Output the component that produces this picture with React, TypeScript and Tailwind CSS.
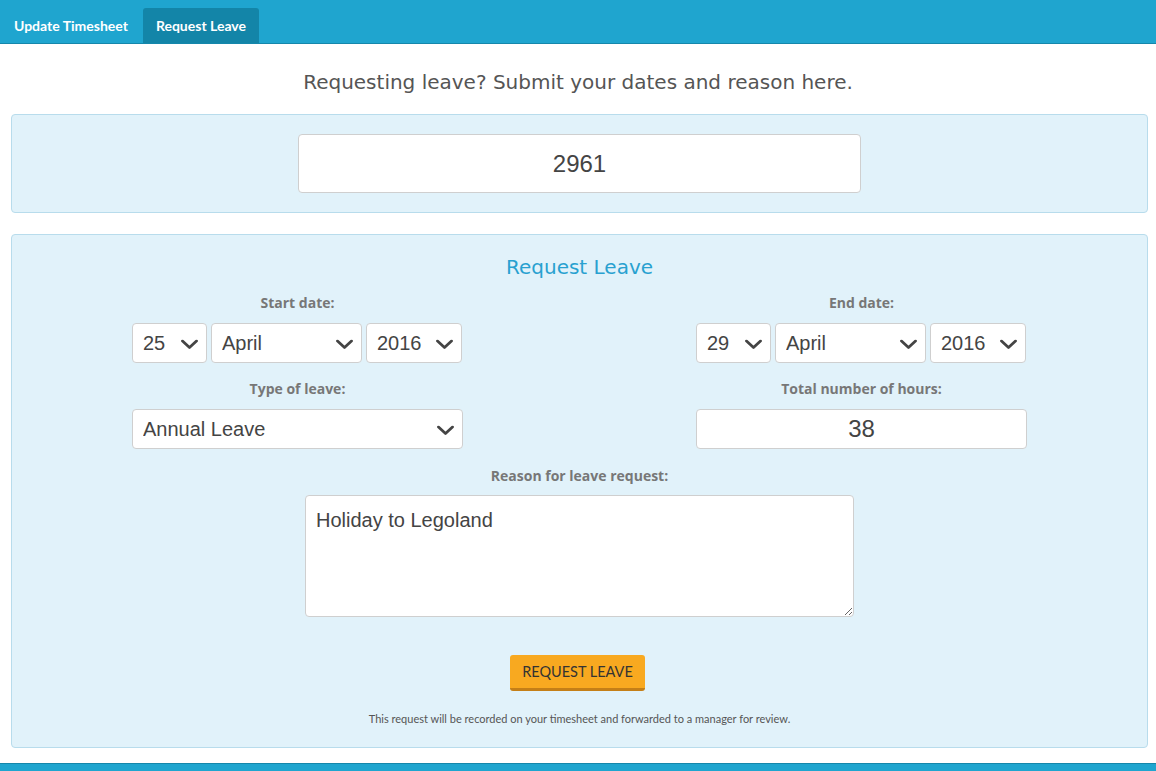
import React, { useState } from "react";

const days = Array.from({ length: 31 }, (_, i) => String(i + 1));
const months = [
  "January", "February", "March", "April", "May", "June",
  "July", "August", "September", "October", "November", "December",
];
const years = ["2015", "2016", "2017"];

const labelCls =
  "block text-center font-['Open_Sans',sans-serif] text-[14px] font-bold leading-[16px] text-[#777]";

function Chevron() {
  return (
    <svg
      className="pointer-events-none absolute right-[9px] top-1/2 -translate-y-[35%]"
      width="17"
      height="10"
      viewBox="0 0 17 10"
      fill="none"
    >
      <polyline points="1.5,1.5 8.5,8 15.5,1.5" stroke="#444" strokeWidth="2.8" strokeLinecap="round" strokeLinejoin="round" />
    </svg>
  );
}

function Select({
  value,
  options,
  onChange,
  className,
}: {
  value: string;
  options: string[];
  onChange: (v: string) => void;
  className: string;
}) {
  return (
    <div className={`relative ${className}`}>
      <select
        value={value}
        onChange={(e) => onChange(e.target.value)}
        className="h-[40px] w-full appearance-none rounded-[4px] border border-[#cfcfcf] bg-white pl-[10px] pr-[30px] font-['Liberation_Sans',Arial,sans-serif] text-[20px] text-[#444] outline-none"
      >
        {options.map((o) => (
          <option key={o} value={o}>
            {o}
          </option>
        ))}
      </select>
      <Chevron />
    </div>
  );
}

function DatePicker({
  label,
  date,
  setDate,
}: {
  label: string;
  date: { d: string; m: string; y: string };
  setDate: (d: { d: string; m: string; y: string }) => void;
}) {
  return (
    <div>
      <label className={labelCls}>{label}</label>
      <div className="mt-[12px] flex gap-[4px]">
        <Select className="w-[75px]" value={date.d} options={days} onChange={(v) => setDate({ ...date, d: v })} />
        <Select className="w-[151px]" value={date.m} options={months} onChange={(v) => setDate({ ...date, m: v })} />
        <Select className="w-[96px]" value={date.y} options={years} onChange={(v) => setDate({ ...date, y: v })} />
      </div>
    </div>
  );
}

export default function App() {
  const [employeeId, setEmployeeId] = useState("2961");
  const [start, setStart] = useState({ d: "25", m: "April", y: "2016" });
  const [end, setEnd] = useState({ d: "29", m: "April", y: "2016" });
  const [leaveType, setLeaveType] = useState("Annual Leave");
  const [hours, setHours] = useState("38");
  const [reason, setReason] = useState("Holiday to Legoland");

  return (
    <div className="flex min-h-[771px] flex-col bg-white">
      {/* Top tab bar */}
      <nav className="flex h-[44px] items-end border-b border-[#1587ab] bg-[#1fa5cf] pl-[1px] font-['Lato',sans-serif] text-[14px] font-bold text-white">
        <button className="flex h-[35px] items-center px-[13px]">Update Timesheet</button>
        <button className="ml-[2px] flex h-[35px] items-center rounded-t-[3px] bg-[#1385a8] px-[13px]">Request Leave</button>
      </nav>

      <h1 className="mt-[24px] text-center font-['DejaVu_Sans',Verdana,sans-serif] text-[20px] leading-[28px] text-[#555]">
        Requesting leave? Submit your dates and reason here.
      </h1>

      <div className="ml-[11px] mr-[8px] mt-[18px] flex justify-center rounded-[4px] border border-[#b8dcec] bg-[#e1f2fa] pb-[19px] pt-[19px]">
        <input
          value={employeeId}
          onChange={(e) => setEmployeeId(e.target.value)}
          className="h-[59px] w-[563px] rounded-[4px] border border-[#cfcfcf] bg-white text-center font-['Liberation_Sans',Arial,sans-serif] text-[24px] text-[#444] outline-none"
        />
      </div>

      <div className="ml-[11px] mr-[8px] mt-[21px] rounded-[4px] border border-[#b8dcec] bg-[#e1f2fa] pb-[21px] pt-[20px]">
        <h2 className="text-center font-['DejaVu_Sans',Verdana,sans-serif] text-[20px] leading-[24px] text-[#28a1d0]">Request Leave</h2>

        <div className="mt-[16px] flex justify-center gap-[233px]">
          <div className="w-[331px]">
            <DatePicker label="Start date:" date={start} setDate={setStart} />
            <label className={`mt-[18px] ${labelCls}`}>Type of leave:</label>
            <Select
              className="mt-[12px] w-[331px]"
              value={leaveType}
              options={["Annual Leave", "Sick Leave", "Unpaid Leave"]}
              onChange={setLeaveType}
            />
          </div>
          <div className="w-[331px]">
            <DatePicker label="End date:" date={end} setDate={setEnd} />
            <label className={`mt-[18px] ${labelCls}`}>Total number of hours:</label>
            <input
              value={hours}
              onChange={(e) => setHours(e.target.value)}
              className="mt-[12px] h-[40px] w-[331px] rounded-[4px] border border-[#cfcfcf] bg-white text-center font-['Liberation_Sans',Arial,sans-serif] text-[24px] text-[#444] outline-none"
            />
          </div>
        </div>

        <label className={`mt-[19px] ${labelCls}`}>Reason for leave request:</label>
        <div className="mt-[11px] flex justify-center">
          <textarea
            value={reason}
            onChange={(e) => setReason(e.target.value)}
            className="h-[122px] w-[549px] rounded-[4px] border border-[#cfcfcf] bg-white px-[10px] pb-[10px] pt-[12px] font-['Liberation_Sans',Arial,sans-serif] text-[20px] leading-[24px] text-[#444] outline-none"
          />
        </div>

        <div className="mt-[38px] flex justify-center">
          <button className="h-[36px] w-[135px] -translate-x-[2px] rounded-[3px] border-b-[3px] border-[#c47f17] bg-[#f8a920] font-['Lato',sans-serif] text-[14.5px] text-[#333]">
            REQUEST LEAVE
          </button>
        </div>

        <p className="mt-[21px] text-center font-['Lato',sans-serif] text-[11px] leading-[14px] text-[#555]">
          This request will be recorded on your timesheet and forwarded to a manager for review.
        </p>
      </div>

      <div className="mt-auto h-[8px] border-t border-[#1587ab] bg-[#1fa5cf]" />
    </div>
  );
}
